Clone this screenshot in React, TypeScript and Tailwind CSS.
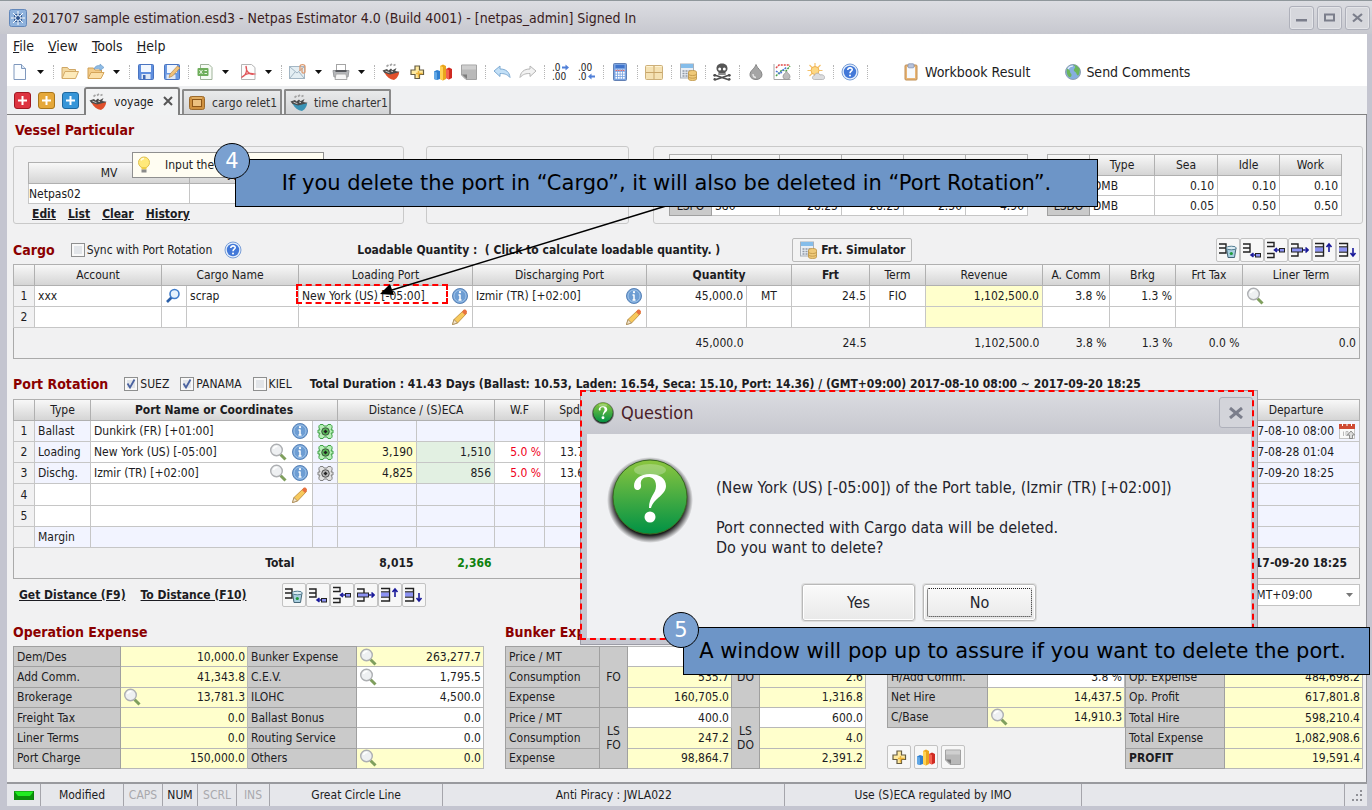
import React from 'react';

/* ---------- icons ---------- */

const svgProps = { width: 18, height: 18, viewBox: '0 0 18 18', fill: 'none' } as const;

const NewIcon = () => (
    <svg {...svgProps}>
        <path d="M3 1.5h7.5l4 4v11H3z" fill="#fbfdff" stroke="#7f98bd" />
        <path d="M10.5 1.5v4h4" fill="#dce8f6" stroke="#7f98bd" />
    </svg>
);

const FolderIcon = () => (
    <svg {...svgProps}>
        <path d="M1 15V4.5h5.5l1.5 2h6.5V9" fill="#f3d9a0" stroke="#cfa766" />
        <path d="M1 15.5 4 8.5h13.5l-3 7z" fill="#fdeaba" stroke="#d4ab68" />
    </svg>
);

const FolderArrowIcon = () => (
    <svg {...svgProps}>
        <path d="M1 15V5h5.5l1.5 2h6.5v2" fill="#f3cb88" stroke="#cf9f55" />
        <path d="M1 15.5 4 9.5h13l-3 6z" fill="#fbdfa8" stroke="#d4a45a" />
        <path d="M7 6c1-3 4-4 6-3.2V1l4 3.5-4 3V6c-2-.6-4-.5-6 0z" fill="#8fbce6" stroke="#6293c4" strokeWidth=".6" />
    </svg>
);

const SaveIcon = () => (
    <svg {...svgProps}>
        <rect x="1.5" y="1.5" width="15" height="15" rx="1" fill="#5f8fdf" stroke="#4a74c0" />
        <rect x="4" y="2" width="10" height="7" fill="#f2f7fe" />
        <rect x="4.5" y="11" width="9" height="5" fill="#dfe8f5" />
        <rect x="6" y="12" width="2.5" height="4" fill="#3f68b4" />
    </svg>
);

const SaveAsIcon = () => (
    <svg {...svgProps}>
        <rect x="1.5" y="1.5" width="15" height="15" rx="1" fill="#6a99e2" stroke="#4a74c0" />
        <rect x="4" y="2" width="10" height="8" fill="#f2f7fe" />
        <rect x="3.5" y="11.5" width="9" height="4.5" fill="#dfe8f5" />
        <path d="M6 14.5 7 11l7.5-8 2.500 2-7.500 8z" fill="#f1c27a" stroke="#b98a4a" strokeWidth=".7" />
    </svg>
);

const ExcelIcon = () => (
    <svg {...svgProps}>
        <path d="M4.500 1.500h8.500l3 3v12H4.500z" fill="#f7fbf5" stroke="#9fb39a" />
        <rect x="1.500" y="5" width="11" height="8" rx="1" fill="#6fae5c" />
        <path d="m3.500 7 3 4m0-4-3 4M8.500 7.500h2.500M8.500 10.500h2.500" stroke="#e8f5e2" />
    </svg>
);

const PdfIcon = () => (
    <svg {...svgProps}>
        <path d="M2.500 1.500h10l3.500 3v12h-13.500z" fill="#fdfdfd" stroke="#b5b5b5" />
        <path d="M2.500 14.500c4-2 6-6 4.500-11.500C7 9 11 12.500 15.500 11 11 9.500 6 11 2.500 14.500z" stroke="#e0565a" strokeWidth="1.300" />
    </svg>
);

const MailIcon = () => (
    <svg {...svgProps}>
        <rect x=".5" y="3.500" width="15" height="12" fill="#e4eef3" stroke="#a3b6c4" />
        <path d="m1 4 7 6 7-6M1 15l5-6M15 15l-5-6" stroke="#a3b6c4" />
        <path d="M11 8V3.500c0-2.500 5-2.500 5 0V9c0 1.500-3 1.500-3 0V4.500" stroke="#dd9a70" strokeWidth="1.300" />
    </svg>
);

const PrintIcon = () => (
    <svg {...svgProps}>
        <rect x="4.500" y="1.500" width="9" height="6" fill="#fff" stroke="#a5a5a5" />
        <path d="M1 7.500h16l-1 6.500H2z" fill="#b4b6b9" stroke="#9a9c9f" />
        <rect x="3.500" y="7" width="11" height="2" fill="#55575b" />
        <path d="M4 11h10l1 5.500H3z" fill="#f6f6f6" stroke="#a8a8a8" />
    </svg>
);

const ShipIcon = ({ hull = '#e0502c' }: { hull?: string }) => (
    <svg {...svgProps}>
        <path d="M4.500 3.500 6.500 2M8 2.500 10 1M11.500 2.500l2-1" stroke="#a3a3a3" strokeWidth="1.600" />
        <path d="M.5 7.500 5 6l1.500 1.500L9 5.500l1.500 1.800L14.500 5l-1.300 3 4.300.8-3 3.700-7 .5-5-3z" fill="#4b4b4b" />
        <path d="M2.500 9.800 8 11.500l9-2.200c.3 2-1 4-2.500 6L12 17c-4-.5-7.500-3-9.500-7.200z" fill={hull} />
        <path d="m3.500 8.200 4 1.500M9 8l2 .6" stroke="#c9c9c9" />
    </svg>
);

const PlusIcon = () => (
    <svg {...svgProps}>
        <path d="M7 3h4.500v4h4v4.500h-4v4H7v-4H3V7h4z" fill="#ffeaa0" stroke="#665c42" strokeWidth="1.200" />
        <path d="M8 10.500h6.500M10.500 8v6.500" stroke="#efb53a" strokeWidth="1.500" />
    </svg>
);

const ChartIcon = () => (
    <svg {...svgProps}>
        <path d="M0 8.500 3 7l3 1v8l-3 1-3-1z" fill="#2f7fd0" />
        <path d="M0 8.500 3 9.500V17l-3-1z" fill="#62a8e6" />
        <path d="m6 3 3-1.500L12 3v13l-3 1.500L6 16z" fill="#e9a51c" />
        <path d="m6 3 3 1v13.500L6 16z" fill="#ffd253" />
        <path d="m12 6 3-1.500L18 6v9l-3 1.500-3-1.500z" fill="#cf2a22" />
        <path d="m12 6 3 1v9.500L12 15z" fill="#f4614f" />
    </svg>
);

const NoteIcon = () => (
    <svg {...svgProps}>
        <path d="M1.500 2h15v14.500H6L1.500 12z" fill="#b9b9b9" stroke="#a2a2a2" />
        <path d="M2 11.500h5v4.500z" fill="#7d7d7d" />
        <path d="M2 2.500h14v4H2z" fill="#cfcfcf" />
    </svg>
);

const UndoIcon = ({ redo = false }: { redo?: boolean }) => (
    <svg {...svgProps}>
        <path
            d={redo ? 'm17 8-6-5v3C5 6 1.500 9 1 14.500 4 11 7 10.500 11 10.500v3z' : 'm1 8 6-5v3c6 0 9.500 3 10 8.500-3-3.500-6-4-10-4v3z'}
            fill={redo ? '#f2f2f2' : '#c3e0f7'}
            stroke={redo ? '#b5b5b5' : '#7fabd3'}
        />
    </svg>
);

const DecimalIcon = ({ less = false }: { less?: boolean }) => (
    <svg {...svgProps}>
        <text x="0" y="8" fontSize="10" fill="#222">{less ? '.00' : '.0'}</text>
        <text x="0" y="17" fontSize="10" fill="#222">{less ? '.0' : '.00'}</text>
        <path d={less ? 'm10 13.500 3.500-3v2H17v2h-3.500v2z' : 'm17 4.500-3.500-3v2H10v2h3.500v2z'} fill="#4f7fd8" />
    </svg>
);

const CalcIcon = () => (
    <svg {...svgProps}>
        <rect x="2.500" y=".5" width="13" height="17" rx="1" fill="#7aa4e2" stroke="#6280b4" />
        <rect x="4.500" y="2" width="9" height="3" fill="#3f74cc" />
        <g fill="#fff">
            {[6.5, 9, 11.5, 14].map((y) => [4.5, 7, 9.5, 12].map((x) => <rect key={x + '-' + y} x={x} y={y} width="1.700" height="1.700" />))}
        </g>
        <path d="M4.500 7.400h9" stroke="#e05656" strokeDasharray="1.700 .8" />
    </svg>
);

const BoxIcon = () => (
    <svg {...svgProps}>
        <rect x=".5" y="2.500" width="17" height="14" rx="1" fill="#f5e2b4" stroke="#cdb07a" />
        <path d="M9 3v13M1 9.500h16" stroke="#c9a669" />
        <path d="M1.500 3.500H8M10 3.500h6.500" stroke="#fff3d2" />
    </svg>
);

const CalcDbIcon = () => (
    <svg {...svgProps}>
        <rect x="1.500" y="1" width="13" height="14" fill="#e9eef4" stroke="#a8b0ba" />
        <rect x="2" y="1" width="12" height="4" fill="#85bdea" />
        <path d="M3.500 8h8M3.500 10.500h8M3.500 13h8" stroke="#8f98a5" strokeDasharray="2 1" strokeWidth="1.400" />
        <path d="M9.500 9c0-2 8-2 8 0v7c0 2-8 2-8 0z" fill="#efc978" stroke="#bb9242" strokeWidth=".8" />
        <path d="M9.500 11c0 2 8 2 8 0M9.500 13.700c0 2 8 2 8 0" stroke="#bb9242" strokeWidth=".8" />
    </svg>
);

const SkullIcon = () => (
    <svg {...svgProps}>
        <path d="m1.500 12 15 5M16.500 12l-15 5" stroke="#4c4c4c" strokeWidth="1.600" />
        <circle cx="1.700" cy="12.300" r="1.400" fill="#4c4c4c" />
        <circle cx="16.300" cy="12.300" r="1.400" fill="#4c4c4c" />
        <circle cx="1.700" cy="16.300" r="1.200" fill="#4c4c4c" />
        <circle cx="16.300" cy="16.300" r="1.200" fill="#4c4c4c" />
        <path d="M9 .5c4 0 5.500 2.500 5.500 5 0 2-1 3-2 3.500V12h-7V9c-1-.5-2-1.500-2-3.500C3.500 3 5 .5 9 .5z" fill="#555" />
        <circle cx="6.700" cy="6" r="1.500" fill="#fff" />
        <circle cx="11.300" cy="6" r="1.500" fill="#fff" />
        <path d="M7 10v2M9 10v2M11 10v2" stroke="#ddd" strokeWidth=".8" />
    </svg>
);

const DropIcon = () => (
    <svg {...svgProps}>
        <path d="M9 1.500c1 4 6 6 6 10 0 3.500-3 5-6 5s-6-1.500-6-5c0-4 5-6 6-10z" fill="#a5a5a5" stroke="#858585" />
        <path d="M6 11c0 2 1 3.500 3 3.500" stroke="#e4e4e4" strokeWidth="1.500" />
    </svg>
);

const GraphIcon = () => (
    <svg {...svgProps}>
        <path d="M1 1v15.500h16.500" stroke="#a5a5a5" />
        <path d="m3 5 3-3h11" stroke="#e04a4a" strokeWidth="1.500" strokeDasharray="2 1" />
        <path d="m3 13 6-6 4 1 4-5" stroke="#45a045" strokeWidth="1.500" strokeDasharray="2 1" />
        <path d="m3 8 4 3 3-4 4-3" stroke="#4c74d8" strokeWidth="1.500" strokeDasharray="2 1" />
        <path d="M13.500 8c.5 2 3.500 3 3.500 5.500S15 16.500 13.500 16.500 10 16 10 13.500 13 10 13.500 8z" fill="#bdbdbd" stroke="#8a8a8a" strokeWidth=".7" />
    </svg>
);

const SunIcon = () => (
    <svg {...svgProps}>
        <path d="M8 0v15M.5 7.500h15M2.500 2l11 11M13.500 2l-11 11" stroke="#f5c26a" strokeWidth="1.200" />
        <circle cx="8" cy="7.500" r="4" fill="#fdd884" stroke="#f0b250" />
        <path d="M7.500 16.500c-3 0-2.500-4 0-4 .5-3 5-3 5.500-.5 3-1 5 1 4.500 3 0 1-1 1.500-2 1.500z" fill="#dcdddf" stroke="#adafb1" strokeWidth=".8" />
    </svg>
);

const HelpIcon = () => (
    <svg {...svgProps}>
        <circle cx="9" cy="9" r="8" fill="#e3eefb" stroke="#7b9fd8" />
        <circle cx="9" cy="9" r="6.200" fill="#4278d8" />
        <path d="M6.800 7c0-3 4.600-2.700 4.400-.2C11.100 8.300 9 8.200 9 10.200" stroke="#fff" strokeWidth="1.600" />
        <circle cx="9" cy="12.500" r="1" fill="#fff" />
    </svg>
);

const ClipboardIcon = () => (
    <svg {...svgProps}>
        <rect x="3" y="2" width="12" height="15" rx="1" fill="#e8b576" stroke="#c08f55" />
        <rect x="5" y="4" width="8" height="11" fill="#f6f9fd" />
        <rect x="6" y=".8" width="6" height="4" rx="1" fill="#b7c3dc" stroke="#8493b4" strokeWidth=".8" />
    </svg>
);

const GlobeIcon = () => (
    <svg {...svgProps}>
        <circle cx="9" cy="9" r="7.500" fill="#86aedf" stroke="#8fa0b5" />
        <path d="M9 1.700c3 0 6 2.300 7 5-1 2 0 4-2 6-2-1-1-3-3-4s-1-3 0-4-1-2-2-3zM3 5.500c1 1 3 1 3 3s2 2 1.500 4-2 2-3 1S2 9 3 5.500z" fill="#6cb65b" />
        <path d="M4 6c1-2 3-3 5-3" stroke="#e4f0fb" strokeWidth="1.200" />
    </svg>
);

const InfoIcon = () => (
    <svg {...svgProps} className="shrink-0">
        <circle cx="9" cy="9" r="7.500" fill="#6d9dd3" stroke="#5a84b8" />
        <circle cx="9" cy="9" r="6" stroke="#a9cbee" strokeWidth=".8" />
        <path d="M9 7.500V13M7.500 8H9M7.500 13h3" stroke="#fff" strokeWidth="1.500" />
        <circle cx="9" cy="5.200" r="1.100" fill="#fff" />
    </svg>
);

const LensIcon = () => (
    <svg {...svgProps} className="shrink-0">
        <path d="m11.500 11.500 5 5" stroke="#7f9f5d" strokeWidth="3" />
        <circle cx="7.500" cy="7" r="5.800" fill="#eef0f2" stroke="#adafb2" strokeWidth="1.400" />
        <path d="M4.500 6c.5-2 2-2.800 4-2.500" stroke="#fff" strokeWidth="1.500" />
    </svg>
);

const BlueLensIcon = () => (
    <svg width="16" height="16" viewBox="0 0 16 16" fill="none">
        <path d="m2 14 5-5" stroke="#2a5ea8" strokeWidth="2.600" />
        <circle cx="9.500" cy="6" r="4.500" fill="#e5f1fc" stroke="#3f7ccb" strokeWidth="1.600" />
    </svg>
);

const PencilIcon = () => (
    <svg {...svgProps} className="shrink-0">
        <path d="m1.500 16.500 1.500-5L12.500 2.500l3 3L6.500 15z" fill="#f7c95c" stroke="#c0913f" strokeWidth=".9" />
        <path d="m11 4 1.500-2c1.500-1.500 4.500 1 3.200 3L14 7z" fill="#e8713f" />
        <path d="m1.500 16.500 1.500-5L6.500 15z" fill="#f4e4c8" stroke="#9a8158" strokeWidth=".7" />
    </svg>
);

const TargetIcon = ({ on = false }: { on?: boolean }) => (
    <svg width="17" height="17" viewBox="0 0 17 17" fill="none" className="mx-auto">
        <path d="M6 1.500H4C2.500 1.500 1.500 3 2 5l1 2H1v3h2l-1 2c-.5 2 .5 3.500 2 3.500h2l1-1.500h3l1 1.500h2c1.500 0 2.500-1.500 2-3.500l-1-2h2V7h-2l1-2c.5-2-.5-3.500-2-3.500h-2L10 3H7z" fill={on ? '#b5f0b5' : '#e2e2e2'} stroke={on ? '#3f9f45' : '#808080'} />
        <circle cx="8.500" cy="8.500" r="3.800" fill={on ? '#56b856' : '#b5b5b5'} stroke="#333" strokeWidth=".8" />
        <path d="M8.500 6.500 10.500 8.500l-2 2-2-2z" fill="#222" />
    </svg>
);

const CalendarIcon = () => (
    <svg {...svgProps} className="shrink-0">
        <rect x="1.500" y="3" width="15" height="13.500" fill="#fafafa" stroke="#c5c5c5" />
        <path d="M1 2h16v5H1z" fill="#cf4a34" />
        <path d="M4.500 1v3M9 1v3M13.500 1v3" stroke="#fff" />
        <path d="M5.500 9.500V14M8 9.500h2v4H8z" stroke="#bbb" />
        <path d="m13 9-3.500 4h2v3.500h3V13h2z" fill="#ddd" stroke="#777" strokeWidth=".8" />
    </svg>
);

const BulbIcon = () => (
    <svg {...svgProps}>
        <circle cx="9" cy="6.500" r="5.500" fill="#ffe97a" stroke="#dfc04f" />
        <path d="M6.500 11h5v2.500h-5z" fill="#f0cf48" />
        <path d="M6.500 13.500h5v3h-5z" fill="#8b8b8b" />
        <path d="M6 4.500c.5-1.300 1.500-2 3-2" stroke="#fffbe0" strokeWidth="1.500" />
    </svg>
);

const CrateIcon = () => (
    <svg {...svgProps}>
        <rect x="1.500" y="2.500" width="15" height="13" rx="2" fill="#cf9140" stroke="#9c6a2c" />
        <rect x="4.500" y="5.500" width="9" height="7" fill="#ecc07e" stroke="#8f5718" />
        <path d="M4 4h10" stroke="#f2c883" />
    </svg>
);

const QuestionIcon = ({ size }: { size: number }) => (
    <svg width={size} height={size} viewBox="0 0 90 90" fill="none">
        <defs>
            <linearGradient id={'q' + size} x1="0" y1="0" x2="0" y2="1">
                <stop offset="0" stopColor="#8cc63f" />
                <stop offset="1" stopColor="#009245" />
            </linearGradient>
            <radialGradient id={'s' + size}>
                <stop offset=".82" stopColor="#111" stopOpacity=".95" />
                <stop offset="1" stopColor="#111" stopOpacity="0" />
            </radialGradient>
        </defs>
        <circle cx="45" cy="46" r="43" fill={'url(#s' + size + ')'} />
        <circle cx="45" cy="43" r="37" fill={'url(#q' + size + ')'} stroke="#3a6b22" />
        <ellipse cx="45" cy="16" rx="16" ry="6" fill="#fff" opacity=".25" />
        <path d="M36 31c1 6-7 7-7 1 0-7 6-12 16-12 9 0 16 4 16 12 0 9-12 12-15 22h-2c0-12 7-14 7-22 0-7-4-9-8-9-5 0-8 3-7 8z" fill="#fff" />
        <circle cx="45" cy="63" r="5.500" fill="#fff" />
    </svg>
);

/* row editing glyphs: trash, insert below, insert, remove, move up, move down */
const rowTools = [
    { label: 'Clear all rows', art: <><path d="M0 3h7v4H0M0 12h7V7" stroke="#222" strokeWidth="1.400" /><path d="M7.500 7h9.500l-1.500 9.500H9z" fill="#a9cfe0" stroke="#446677" /><ellipse cx="12.300" cy="7" rx="5" ry="1.800" fill="#dcecf3" stroke="#557f94" /><circle cx="12.300" cy="12.500" r="1.600" fill="#1f9a3c" /></> },
    { label: 'Add row', art: <><path d="M0 3h7v4H0M0 11h7V7" stroke="#222" strokeWidth="1.400" /><path d="M8 14h4M10.500 12 8 14l2.500 2" stroke="#1a1a9a" strokeWidth="1.600" /><rect x="12.500" y="12.500" width="5" height="3.500" fill="#8c92f2" stroke="#222" /></> },
    { label: 'Insert row', art: <><path d="M0 1.500h7v4H0M0 12.500h7v4H0" stroke="#222" strokeWidth="1.400" /><path d="M7.500 9h5M10 7 7.500 9l2.500 2" stroke="#1a1a9a" strokeWidth="1.600" /><rect x="12.500" y="7.500" width="5" height="3.500" fill="#8c92f2" stroke="#222" /></> },
    { label: 'Remove row', art: <><path d="M0 3h7v4M0 15h7v-4" stroke="#222" strokeWidth="1.400" /><rect x=".5" y="7" width="11" height="4" fill="#8c92f2" stroke="#222" /><path d="M12 9h5M14.500 6.500 17 9l-2.500 2.500" stroke="#1a1a9a" strokeWidth="1.600" /></> },
    { label: 'Move row up', art: <><path d="M0 2.500h8.500V15H0M0 11h8.500M0 6h8.500" stroke="#222" strokeWidth="1.400" /><rect x="0" y="6.500" width="8" height="4" fill="#8c92f2" /><path d="M14 11V3M11.500 6 14 3l2.500 3" stroke="#1a1a9a" strokeWidth="1.600" /></> },
    { label: 'Move row down', art: <><path d="M0 2.500h8.500V15H0M0 11h8.500M0 6h8.500" stroke="#222" strokeWidth="1.400" /><rect x="0" y="6.500" width="8" height="4" fill="#8c92f2" /><path d="M14 7v8M11.500 12l2.500 3 2.500-3" stroke="#1a1a9a" strokeWidth="1.600" /></> },
];

/* ---------- small building blocks ---------- */

function RowTools() {
    return (
        <div className="flex">
            {rowTools.map((tool) => (
                <button key={tool.label} aria-label={tool.label} className="flex h-6 w-6 items-center justify-center rounded-[2px] border border-[#c3c3c3] bg-[#f7f7f7]">
                    <svg {...svgProps} className="shrink-0">{tool.art}</svg>
                </button>
            ))}
        </div>
    );
}

function Check({ label, checked = false }: { label: string; checked?: boolean }) {
    return (
        <label className="flex items-center gap-[2px] whitespace-nowrap">
            <span className="grid h-[14px] w-[14px]">
                <input type="checkbox" defaultChecked={checked} className="peer col-start-1 row-start-1 h-[14px] w-[14px] appearance-none border border-[#8e8f8f] bg-[#e2e5e9] shadow-[inset_0_0_0_2px_#f8f8f8]" />
                <svg viewBox="0 0 14 14" fill="none" className="pointer-events-none invisible col-start-1 row-start-1 h-[14px] w-[14px] peer-checked:visible">
                    <path d="m3.500 6.500 2.500 4 4.500-8" stroke="#4a62a0" strokeWidth="1.800" />
                </svg>
            </span>
            {label}
        </label>
    );
}

function Cols({ widths }: { widths: number[] }) {
    return (
        <colgroup>
            {widths.map((width, idx) => <col key={idx} style={{ width }} />)}
        </colgroup>
    );
}

const SectionTitle = ({ children }: { children: React.ReactNode }) => (
    <h2 className="text-sm font-bold whitespace-nowrap text-[#8b0000]">{children}</h2>
);

const GroupBox = ({ className, children }: { className: string; children?: React.ReactNode }) => (
    <div className={'h-[78px] rounded-[3px] border border-[#c9c9c9] ' + className}>{children}</div>
);

const headRow = 'h-[21px] bg-linear-to-b from-[#f8f8f8] to-[#d3d3d3]';
const th = 'border border-[#b0b0b0] font-normal whitespace-nowrap';
const thBold = 'border border-[#b0b0b0] font-bold whitespace-nowrap';
const td = 'border border-[#c6c6c6] bg-white px-[3px] whitespace-nowrap';
const tdCalc = 'border border-[#c6c6c6] bg-[#ffffcc] px-[3px] whitespace-nowrap';
const tdBlue = 'border border-[#c6c6c6] bg-[#f2f4ff] px-[3px] whitespace-nowrap';
const tdNum = 'border border-[#c6c6c6] bg-[#f1f1f2] text-center';
const tdLabel = 'border border-[#a0a0a0] bg-[#cacaca] px-[3px] whitespace-nowrap';
const table = 'w-full table-fixed border-collapse border border-[#999]';

/* ---------- top of the window ---------- */

const windowButton = 'flex h-6 w-[25px] items-center justify-center rounded-[3px] border border-[#aeb0ba] bg-[#d6d7dc] shadow-[inset_0_0_0_1px_#e3e4e8]';

function TitleBar() {
    return (
        <header className="-mr-[5px] -ml-[7px] flex h-[34px] items-center justify-between border-t border-[#8f979b] bg-linear-to-b from-[#dcdde2] to-[#c7c8cf] pr-[2px] pl-[9px]">
            <div className="flex items-center gap-[5px]">
                <svg {...svgProps}>
                    <rect x=".5" y=".5" width="17" height="17" rx="2" fill="#8fb2dc" stroke="#6287ba" />
                    <circle cx="9" cy="9" r="4" stroke="#2f568f" />
                    <path d="M9 2v14M2 9h14M4 4l10 10M14 4 4 14" stroke="#fff" />
                    <circle cx="9" cy="9" r="2" fill="#2f568f" />
                </svg>
                <h1 className="text-sm text-[#3a1c1c]">201707 sample estimation.esd3 - Netpas Estimator 4.0 (Build 4001) - [netpas_admin] Signed In</h1>
            </div>
            <div className="flex gap-[3px]">
                <button aria-label="Minimize" className={windowButton}>
                    <svg width="11" height="11" viewBox="0 0 11 11"><rect y="7" width="11" height="2.500" fill="#7b7e8b" /></svg>
                </button>
                <button aria-label="Maximize" className={windowButton}>
                    <svg width="11" height="11" viewBox="0 0 11 11"><rect x="1" y="2.500" width="9" height="6" fill="none" stroke="#7b7e8b" strokeWidth="2" /></svg>
                </button>
                <button aria-label="Close" className={windowButton}>
                    <svg width="11" height="11" viewBox="0 0 11 11"><path d="m1 2 9 7.500M10 2 1 9.500" stroke="#7b7e8b" strokeWidth="2.200" /></svg>
                </button>
            </div>
        </header>
    );
}

type Tool = { name: string; icon?: React.ReactNode; menu?: boolean; sep?: 'thin' | 'wide' };

const tools: Tool[] = [
    { name: 'New', icon: <NewIcon />, menu: true, sep: 'thin' },
    { name: 'Open', icon: <FolderIcon /> },
    { name: 'Import', icon: <FolderArrowIcon />, menu: true, sep: 'thin' },
    { name: 'Save', icon: <SaveIcon /> },
    { name: 'Save as', icon: <SaveAsIcon />, sep: 'thin' },
    { name: 'Excel', icon: <ExcelIcon />, menu: true },
    { name: 'PDF', icon: <PdfIcon />, menu: true, sep: 'thin' },
    { name: 'Mail', icon: <MailIcon />, menu: true },
    { name: 'Print', icon: <PrintIcon />, menu: true, sep: 'thin' },
    { name: 'Voyage', icon: <ShipIcon /> },
    { name: 'Add', icon: <PlusIcon /> },
    { name: 'Chart', icon: <ChartIcon /> },
    { name: 'Note', icon: <NoteIcon />, sep: 'thin' },
    { name: 'Undo', icon: <UndoIcon /> },
    { name: 'Redo', icon: <UndoIcon redo />, sep: 'thin' },
    { name: 'More decimals', icon: <DecimalIcon /> },
    { name: 'Fewer decimals', icon: <DecimalIcon less />, sep: 'thin' },
    { name: 'Calculator', icon: <CalcIcon />, sep: 'wide' },
    { name: 'Layout', icon: <BoxIcon />, sep: 'wide' },
    { name: 'Freight simulator', icon: <CalcDbIcon />, sep: 'wide' },
    { name: 'Piracy', icon: <SkullIcon />, sep: 'wide' },
    { name: 'Bunker', icon: <DropIcon /> },
    { name: 'Bunker prices', icon: <GraphIcon />, sep: 'wide' },
    { name: 'Weather', icon: <SunIcon />, sep: 'wide' },
    { name: 'Help', icon: <HelpIcon />, sep: 'wide' },
];

function Toolbar() {
    return (
        <div className="flex h-7 items-center bg-white">
            {tools.map((tool) => (
                <React.Fragment key={tool.name}>
                    <button aria-label={tool.name} className="flex w-[26px] shrink-0 justify-center">{tool.icon}</button>
                    {tool.menu && (
                        <button aria-label={tool.name + ' menu'} className="w-[17px] shrink-0 pl-1">
                            <svg width="7" height="4" viewBox="0 0 7 4"><path d="M0 0h7L3.500 4z" fill="#111" /></svg>
                        </button>
                    )}
                    {tool.sep && (
                        <span className={'flex shrink-0 justify-center ' + (tool.sep === 'wide' ? 'w-2' : 'w-[7px]')}>
                            <span className="h-[14px] border-l border-dotted border-[#b5b5b5]" />
                        </span>
                    )}
                </React.Fragment>
            ))}
            <button className="ml-[31px] flex items-center gap-[5px] text-sm whitespace-nowrap"><ClipboardIcon />Workbook Result</button>
            <button className="ml-[34px] flex items-center gap-1 text-sm whitespace-nowrap"><GlobeIcon />Send Comments</button>
        </div>
    );
}

const addButton = 'flex h-[17px] w-[17px] items-center justify-center rounded-[3px] border';
const backTab = 'flex h-[25px] items-center rounded-t-[2px] border-2 border-b-0 border-[#8a8a8a] bg-linear-to-b from-[#e9eaeb] to-[#d3d4d6] pl-1 text-[#333] whitespace-nowrap';

function Tabs() {
    const plus = <svg width="9" height="9" viewBox="0 0 9 9"><path d="M4.500 0v9M0 4.500h9" stroke="#fff" strokeWidth="2" /></svg>;
    return (
        <div className="flex h-[29px] items-end border-b border-[#808080] bg-[#eff0f2] pl-[7px]">
            <div className="flex items-center gap-[7px] self-center">
                <button aria-label="New voyage" className={addButton + ' border-[#a01822] bg-[#dd3340]'}>{plus}</button>
                <button aria-label="New cargo relet" className={addButton + ' border-[#a8751a] bg-[#e5a83a]'}>{plus}</button>
                <button aria-label="New time charter" className={addButton + ' border-[#1d679e] bg-[#3695d8]'}>{plus}</button>
            </div>
            <div role="tablist" className="ml-[5px] flex items-end gap-[2px]">
                <button role="tab" aria-selected="true" className="-mb-px flex h-[28px] w-[96px] items-center gap-[7px] rounded-t-[3px] border-2 border-b-0 border-[#808080] bg-[#f1f2f3] pl-[3px]">
                    <ShipIcon />
                    <span>voyage</span>
                    <svg width="10" height="10" viewBox="0 0 10 10" className="mb-[3px] ml-[2px]"><path d="m1 1 8 8M9 1 1 9" stroke="#555" strokeWidth="2" /></svg>
                </button>
                <button role="tab" aria-selected="false" className={backTab + ' w-[100px] gap-[6px]'}><CrateIcon />cargo relet1</button>
                <button role="tab" aria-selected="false" className={backTab + ' w-[107px] gap-[6px]'}><ShipIcon hull="#3b93b5" />time charter1</button>
            </div>
        </div>
    );
}

/* ---------- sections ---------- */

function VesselParticular() {
    return (
        <section>
            <div className="mb-[2px] flex h-[29px] items-center pl-[2px]"><SectionTitle>Vessel Particular</SectionTitle></div>
            <div className="flex">
                <GroupBox className="w-[391px] shrink-0 pt-[15px] pr-4 pl-[14px]">
                    <table className={table}>
                        <Cols widths={[161, 90, 108]} />
                        <thead><tr className={headRow}><th className={th}>MV</th><th className={th}>Type</th><th className={th} /></tr></thead>
                        <tbody><tr className="h-5"><td className={td + ' pl-0'}>Netpas02</td><td className={td} /><td className={td} /></tr></tbody>
                    </table>
                    <nav className="flex gap-3 pt-[2px] pl-1 font-bold underline">
                        <a href="#edit">Edit</a>
                        <a href="#list">List</a>
                        <a href="#clear">Clear</a>
                        <a href="#history">History</a>
                    </nav>
                </GroupBox>
                <GroupBox className="ml-[22px] w-[203px] shrink-0" />
                <GroupBox className="ml-6 flex flex-1 gap-[19px] pt-[7px] pr-5 pl-[15px]">
                    <div className="flex-[359]">
                        <table className={table}>
                            <Cols widths={[42, 68, 62, 62, 62, 62]} />
                            <thead>
                                <tr className={headRow}><th className={th} /><th className={th} /><th className={th} /><th className={th} /><th className={th} /><th className={th} /></tr>
                            </thead>
                            <tbody>
                                <tr className="h-5"><td className={tdLabel} /><td className={td} /><td className={td} /><td className={td} /><td className={td} /><td className={td} /></tr>
                                <tr className="h-5 text-right"><td className={tdLabel + ' text-center'}>LSFO</td><td className={td + ' text-left'}>380</td><td className={td}>28.25</td><td className={td}>28.25</td><td className={td}>2.50</td><td className={td}>4.90</td></tr>
                            </tbody>
                        </table>
                    </div>
                    <div className="flex-[294]">
                        <table className={table}>
                            <Cols widths={[42, 65, 63, 62, 62]} />
                            <thead>
                                <tr className={headRow}><th className={th} /><th className={th}>Type</th><th className={th}>Sea</th><th className={th}>Idle</th><th className={th}>Work</th></tr>
                            </thead>
                            <tbody>
                                <tr className="h-5 text-right"><td className={tdLabel} /><td className={td + ' text-left'}>DMB</td><td className={td}>0.10</td><td className={td}>0.10</td><td className={td}>0.10</td></tr>
                                <tr className="h-5 text-right"><td className={tdLabel + ' text-center'}>LSDO</td><td className={td + ' text-left'}>DMB</td><td className={td}>0.05</td><td className={td}>0.50</td><td className={td}>0.50</td></tr>
                            </tbody>
                        </table>
                    </div>
                </GroupBox>
            </div>
        </section>
    );
}

function Cargo() {
    return (
        <section>
            <div className="mt-3 flex h-7 items-center">
                <SectionTitle>Cargo</SectionTitle>
                <div className="ml-4"><Check label="Sync with Port Rotation" /></div>
                <button aria-label="Help on sync" className="ml-3"><HelpIcon /></button>
                <button className="ml-[115px] font-bold whitespace-pre">Loadable Quantity :  ( Click to calculate loadable quantity. )</button>
                <button className="ml-[72px] flex h-6 w-[120px] items-center justify-center gap-1 rounded-[2px] border border-[#b9b9b9] bg-[#f3f3f3] font-bold whitespace-nowrap"><CalcDbIcon />Frt. Simulator</button>
                <div className="ml-auto"><RowTools /></div>
            </div>
            <table className={table + ' bg-[#f1f1f2]'}>
                <Cols widths={[21, 127, 25, 112, 174, 174, 100, 45, 78, 56, 117, 67, 66, 67, 117]} />
                <thead>
                    <tr className={headRow}>
                        <th className={th} />
                        <th className={th}>Account</th>
                        <th className={th} colSpan={2}>Cargo Name</th>
                        <th className={th}>Loading Port</th>
                        <th className={th}>Discharging Port</th>
                        <th className={thBold} colSpan={2}>Quantity</th>
                        <th className={thBold}>Frt</th>
                        <th className={th}>Term</th>
                        <th className={th}>Revenue</th>
                        <th className={th}>A. Comm</th>
                        <th className={th}>Brkg</th>
                        <th className={th}>Frt Tax</th>
                        <th className={th}>Liner Term</th>
                    </tr>
                </thead>
                <tbody>
                    <tr className="h-[21px] text-right">
                        <td className={tdNum}>1</td>
                        <td className={td + ' text-left'}>xxx</td>
                        <td className={td}><button aria-label="Find account" className="block"><BlueLensIcon /></button></td>
                        <td className={td + ' text-left'}>scrap</td>
                        <td className={td}><div className="flex items-center justify-between">New York (US) [-05:00]<InfoIcon /></div></td>
                        <td className={td}><div className="flex items-center justify-between">Izmir (TR) [+02:00]<InfoIcon /></div></td>
                        <td className={td}>45,000.0</td>
                        <td className={td + ' text-center'}>MT</td>
                        <td className={td}>24.5</td>
                        <td className={td + ' text-center'}>FIO</td>
                        <td className={tdCalc}>1,102,500.0</td>
                        <td className={td}>3.8 %</td>
                        <td className={td}>1.3 %</td>
                        <td className={td} />
                        <td className={td}><LensIcon /></td>
                    </tr>
                    <tr className="h-[21px]">
                        <td className={tdNum}>2</td>
                        <td className={td} />
                        <td className={td} />
                        <td className={td} />
                        <td className={td}><div className="flex justify-end"><PencilIcon /></div></td>
                        <td className={td}><div className="flex justify-end"><PencilIcon /></div></td>
                        <td className={td} />
                        <td className={td} />
                        <td className={td} />
                        <td className={td} />
                        <td className={tdCalc} />
                        <td className={td} />
                        <td className={td} />
                        <td className={td} />
                        <td className={td} />
                    </tr>
                </tbody>
                <tfoot>
                    <tr className="h-[31px] border border-[#aaa] text-right">
                        <td colSpan={6} />
                        <td className="px-[3px]">45,000.0</td>
                        <td />
                        <td className="px-[3px]">24.5</td>
                        <td />
                        <td className="px-[3px]">1,102,500.0</td>
                        <td className="px-[3px]">3.8 %</td>
                        <td className="px-[3px]">1.3 %</td>
                        <td className="px-[3px]">0.0 %</td>
                        <td className="px-[3px]">0.0</td>
                    </tr>
                </tfoot>
            </table>
        </section>
    );
}

type Leg = {
    no: string; type: string; port: string; lens?: boolean; info?: boolean; edit?: boolean; target?: 'on' | 'off';
    dist?: string; eca?: string; wf?: string; spd?: string; departure?: string; calendar?: boolean; free?: boolean;
};

const legs: Leg[] = [
    { no: '1', type: 'Ballast', port: 'Dunkirk (FR) [+01:00]', info: true, target: 'on', departure: '2017-08-10 08:00', calendar: true },
    { no: '2', type: 'Loading', port: 'New York (US) [-05:00]', lens: true, info: true, target: 'on', dist: '3,190', eca: '1,510', wf: '5.0 %', spd: '13.70', departure: '2017-08-28 01:04' },
    { no: '3', type: 'Dischg.', port: 'Izmir (TR) [+02:00]', lens: true, info: true, target: 'off', dist: '4,825', eca: '856', wf: '5.0 %', spd: '13.60', departure: '2017-09-20 18:25' },
    { no: '4', type: '', port: '', edit: true, free: true },
    { no: '5', type: '', port: '', free: true },
    { no: '', type: 'Margin', port: '' },
];

function PortRotation() {
    return (
        <section>
            <div className="mt-[10px] flex h-[30px] items-center">
                <SectionTitle>Port Rotation</SectionTitle>
                <div className="ml-4 flex gap-[11px]">
                    <Check label="SUEZ" checked />
                    <Check label="PANAMA" checked />
                    <Check label="KIEL" />
                </div>
                <p className="ml-[18px] font-bold whitespace-nowrap">Total Duration : 41.43 Days (Ballast: 10.53, Laden: 16.54, Seca: 15.10, Port: 14.36) / (GMT+09:00) 2017-08-10 08:00 ~ 2017-09-20 18:25</p>
            </div>
            <table className={table + ' h-[180px] bg-[#f1f1f2]'}>
                <Cols widths={[21, 56, 222, 25, 79, 78, 50, 50, 638, 127]} />
                <thead>
                    <tr className={headRow}>
                        <th className={th} />
                        <th className={th}>Type</th>
                        <th className={thBold} colSpan={2}>Port Name or Coordinates</th>
                        <th className={th} colSpan={2}>Distance / (S)ECA</th>
                        <th className={th}>W.F</th>
                        <th className={th}>Spd</th>
                        <th className={th} />
                        <th className={th}>Departure</th>
                    </tr>
                </thead>
                <tbody>
                    {legs.map((leg, idx) => {
                        const filled = leg.dist ? td : tdBlue;
                        return (
                            <tr key={idx} className="h-[21px] text-right">
                                <td className={tdNum}>{leg.no}</td>
                                <td className={(leg.free ? td : tdBlue) + ' text-left'}>{leg.type}</td>
                                <td className={leg.type === 'Margin' ? tdBlue : td}>
                                    <div className="flex items-center gap-1">
                                        <span className="mr-auto">{leg.port}</span>
                                        {leg.lens && <LensIcon />}
                                        {leg.info && <InfoIcon />}
                                        {leg.edit && <PencilIcon />}
                                    </div>
                                </td>
                                <td className={tdBlue}>{leg.target && <TargetIcon on={leg.target === 'on'} />}</td>
                                <td className={leg.dist ? tdCalc : tdBlue}>{leg.dist}</td>
                                <td className={leg.eca ? 'border border-[#c6c6c6] bg-[#e2f0e2] px-[3px]' : tdBlue}>{leg.eca}</td>
                                <td className={filled + ' text-[#f00020]'}>{leg.wf}</td>
                                <td className={filled}>{leg.spd}</td>
                                <td className={tdBlue} />
                                <td className={tdBlue}>
                                    <div className="flex items-center justify-end gap-1">
                                        {leg.departure}
                                        {leg.calendar ? <CalendarIcon /> : <span className="w-[18px]" />}
                                    </div>
                                </td>
                            </tr>
                        );
                    })}
                </tbody>
                <tfoot>
                    <tr className="h-[31px] border border-[#aaa] text-right font-bold">
                        <td colSpan={3} className="pr-[18px]">Total</td>
                        <td />
                        <td className="px-[3px]">8,015</td>
                        <td className="px-[3px] text-[#0f820f]">2,366</td>
                        <td colSpan={4} className="pr-3">2017-09-20 18:25</td>
                    </tr>
                </tfoot>
            </table>
            <div className="mt-1 flex h-6 items-center">
                <a href="#get-distance" className="ml-[6px] font-bold underline">Get Distance (F9)</a>
                <a href="#to-distance" className="mr-9 ml-[15px] font-bold underline">To Distance (F10)</a>
                <RowTools />
                <div className="ml-auto grid w-[119px] items-center">
                    <select aria-label="Time zone" defaultValue="GMT+09:00" className="col-start-1 row-start-1 h-[22px] appearance-none border border-[#c3c3c3] bg-white pl-[6px]">
                        <option>GMT+09:00</option>
                    </select>
                    <svg width="7" height="4" viewBox="0 0 7 4" className="pointer-events-none col-start-1 row-start-1 mr-[7px] justify-self-end"><path d="M0 0h7L3.500 4z" fill="#777" /></svg>
                </div>
            </div>
        </section>
    );
}

type Cell = [label: string, value: string, white?: boolean, lens?: boolean];

function Value({ cell }: { cell: Cell }) {
    return (
        <td className={(cell[2] ? 'bg-white' : 'bg-[#ffffcc]') + ' border border-[#b8b8b8] px-[2px]'}>
            <div className="flex items-center">
                {cell[3] && <LensIcon />}
                <span className="ml-auto">{cell[1]}</span>
            </div>
        </td>
    );
}

const operation: [Cell, Cell][] = [
    [['Dem/Des', '10,000.0'], ['Bunker Expense', '263,277.7', false, true]],
    [['Add Comm.', '41,343.8'], ['C.E.V.', '1,795.5', true, true]],
    [['Brokerage', '13,781.3', false, true], ['ILOHC', '4,500.0', true]],
    [['Freight Tax', '0.0'], ['Ballast Bonus', '0.0', true]],
    [['Liner Terms', '0.0'], ['Routing Service', '0.0', true]],
    [['Port Charge', '150,000.0'], ['Others', '0.0', false, true]],
];

const bunker = [
    ['Price / MT', '', ''],
    ['Consumption', '535.7', '2.6'],
    ['Expense', '160,705.0', '1,316.8'],
    ['Price / MT', '400.0', '600.0'],
    ['Consumption', '247.2', '4.0'],
    ['Expense', '98,864.7', '2,391.2'],
];

const hire: Cell[] = [
    ['', '', true],
    ['H/Add Comm.', '3.8 %', true],
    ['Net Hire', '14,437.5'],
    ['C/Base', '14,910.3', false, true],
];

const profit: Cell[] = [
    ['', ''],
    ['Op. Expense', '484,698.2'],
    ['Op. Profit', '617,801.8'],
    ['Total Hire', '598,210.4'],
    ['Total Expense', '1,082,908.6'],
    ['PROFIT', '19,591.4'],
];

const smallButton = 'flex h-6 w-6 items-center justify-center rounded-[2px] border border-[#c3c3c3] bg-[#f7f7f7]';

function Summary() {
    return (
        <div className="mt-[11px] grid grid-cols-[470fr_360fr_474fr] gap-x-[21px]">
            <section>
                <div className="flex h-7 items-center"><SectionTitle>Operation Expense</SectionTitle></div>
                <table className={table + ' h-[123px]'}>
                    <Cols widths={[107, 127, 109, 127]} />
                    <tbody>
                        {operation.map(([left, right]) => (
                            <tr key={left[0]} className="h-5">
                                <td className={tdLabel}>{left[0]}</td>
                                <Value cell={left} />
                                <td className={tdLabel}>{right[0]}</td>
                                <Value cell={right} />
                            </tr>
                        ))}
                    </tbody>
                </table>
            </section>
            <section>
                <div className="flex h-7 items-center"><SectionTitle>Bunker Expense</SectionTitle></div>
                <table className={table + ' h-[123px]'}>
                    <Cols widths={[94, 28, 104, 28, 106]} />
                    <tbody>
                        {bunker.map(([label, fo, dO], idx) => (
                            <tr key={idx} className="h-5">
                                <td className={tdLabel}>{label}</td>
                                {idx % 3 === 0 && <td rowSpan={3} className="border border-[#a0a0a0] bg-[#cacaca] text-center leading-[14px]">{idx ? <>LS<br />FO</> : 'FO'}</td>}
                                <Value cell={['', fo, idx % 3 === 0]} />
                                {idx % 3 === 0 && <td rowSpan={3} className="border border-[#a0a0a0] bg-[#cacaca] text-center leading-[14px]">{idx ? <>LS<br />DO</> : 'DO'}</td>}
                                <Value cell={['', dO, idx % 3 === 0]} />
                            </tr>
                        ))}
                    </tbody>
                </table>
            </section>
            <div className="flex h-[123px] self-end">
                <div className="flex flex-1 flex-col justify-between">
                    <table className={table + ' h-[82px]'}>
                        <Cols widths={[100, 137]} />
                        <tbody>
                            {hire.map((cell) => <tr key={cell[0]} className="h-5"><td className={tdLabel}>{cell[0]}</td><Value cell={cell} /></tr>)}
                        </tbody>
                    </table>
                    <div className="flex gap-[3px]">
                        <button aria-label="Add result" className={smallButton}><PlusIcon /></button>
                        <button aria-label="Show chart" className={smallButton}><ChartIcon /></button>
                        <button aria-label="Show note" className={smallButton}><NoteIcon /></button>
                    </div>
                </div>
                <div className="flex-1">
                    <table className={table + ' h-[123px]'}>
                        <Cols widths={[99, 138]} />
                        <tbody>
                            {profit.map((cell) => (
                                <tr key={cell[0]} className="h-5">
                                    <td className={tdLabel + (cell[0] === 'PROFIT' ? ' font-bold' : '')}>{cell[0]}</td>
                                    <Value cell={cell} />
                                </tr>
                            ))}
                        </tbody>
                    </table>
                </div>
            </div>
        </div>
    );
}

const statusCell = 'flex items-center justify-center border-r border-[#a5a5ab] whitespace-nowrap';

function StatusBar() {
    return (
        <footer className="flex h-6 border-t-2 border-[#999a9e] bg-[#e6e7eb]">
            <div className={statusCell + ' w-[34px]'}>
                <svg width="20" height="9" viewBox="0 0 20 9"><rect width="20" height="9" fill="#0c8f0c" /><path d="M0 0h20l-4 5H4z" fill="#22ec22" /><path d="M0 0h20v9" stroke="#0a6a0a" fill="none" strokeWidth=".8" /></svg>
            </div>
            <div className={statusCell + ' w-[83px]'}>Modified</div>
            <div className={statusCell + ' w-[39px] text-[#a9a9ad]'}>CAPS</div>
            <div className={statusCell + ' w-[35px]'}>NUM</div>
            <div className={statusCell + ' w-[39px] text-[#a9a9ad]'}>SCRL</div>
            <div className={statusCell + ' w-[33px] text-[#a9a9ad]'}>INS</div>
            <div className={statusCell + ' flex-[173]'}>Great Circle Line</div>
            <div className={statusCell + ' flex-[342]'}>Anti Piracy : JWLA022</div>
            <div className={statusCell + ' flex-[297]'}>Use (S)ECA regulated by IMO</div>
            <div className={statusCell + ' flex-[263]'} />
            <div className="flex w-[22px] items-end justify-end pr-1 pb-1">
                <svg width="12" height="12" viewBox="0 0 12 12" fill="#8f9096">
                    <path d="M9 0h2v2H9zM5 4h2v2H5zM9 4h2v2H9zM1 9h2v2H1zM5 9h2v2H5zM9 9h2v2H9z" />
                </svg>
            </div>
        </footer>
    );
}

/* ---------- things floating over the window ---------- */

const dialogButton = 'h-[37px] w-[113px] rounded-[3px] border border-[#b9b9b9] bg-linear-to-b from-[#fafafa] to-[#e9e9e9] shadow-[inset_0_0_0_1px_#fff,0_0_0_1px_#dcdcdc]';

function QuestionDialog() {
    return (
        <div role="dialog" aria-label="Question" className="absolute top-[390px] left-[580px] h-[255px] w-[678px] border border-[#9b9ca6] bg-[#c6c7d0] px-[6px] pb-[6px]">
            <div className="-mx-[6px] flex h-[43px] items-center bg-linear-to-b from-[#dbdce1] to-[#c7c8cf] pr-1 pl-[10px]">
                <QuestionIcon size={24} />
                <span className="ml-[6px] text-lg text-[#4a2027]">Question</span>
                <button aria-label="Close dialog" className="ml-auto flex h-[31px] w-[34px] items-center justify-center rounded-[3px] border border-[#aeb0ba] bg-[#d3d4da]">
                    <svg width="14" height="12" viewBox="0 0 14 12"><path d="m1 1 12 10M13 1 1 11" stroke="#7b7e8b" strokeWidth="3" /></svg>
                </button>
            </div>
            <div className="h-[204px] bg-[#f0f1f3] pt-5 pl-[18px] text-base text-[#24242c]">
                <div className="flex gap-[21px]">
                    <QuestionIcon size={90} />
                    <div className="pt-6 leading-5 whitespace-nowrap">
                        <p className="mb-5">(New York (US) [-05:00]) of the Port table, (Izmir (TR) [+02:00])</p>
                        <p>Port connected with Cargo data will be deleted.</p>
                        <p>Do you want to delete?</p>
                    </div>
                </div>
                <div className="mt-[26px] ml-[197px] flex gap-2">
                    <button className={dialogButton}>Yes</button>
                    <button className={dialogButton + ' p-[3px]'}>
                        <span className="flex h-full items-center justify-center rounded-[2px] border border-dotted border-[#222]">No</span>
                    </button>
                </div>
            </div>
        </div>
    );
}

const callout = 'absolute flex h-12 items-center justify-center border border-black bg-[#6d95c7] whitespace-nowrap';
const bubble = 'absolute flex h-9 w-9 items-center justify-center rounded-full border border-black bg-[#7aa0d0] text-white';

function Callouts() {
    return (
        <div className="font-['DejaVu_Sans',sans-serif] text-[21px] text-black">
            <div className="absolute top-[284px] left-[296px] h-[20px] w-[152px] border-2 border-dashed border-[#f00]" />
            <svg width="300" height="100" viewBox="0 0 300 100" className="pointer-events-none absolute top-[200px] left-[370px]">
                <path d="M296 6 22 90" stroke="#000" strokeWidth="1.500" />
                <path d="m10 94 10-10 4 11z" fill="#000" />
            </svg>
            <div className={callout + ' top-[159px] left-[235px] w-[863px]'}>
                If you delete the port in “Cargo”, it will also be deleted in “Port Rotation”.
            </div>
            <div className={bubble + ' top-[143px] left-[214px]'}>4</div>
            <div className="absolute top-[390px] left-[580px] h-[250px] w-[674px] border-2 border-dashed border-[#f00]" />
            <div className={callout + ' top-[627px] left-[683px] w-[687px] pr-2'}>
                A window will pop up to assure if you want to delete the port.
            </div>
            <div className={bubble + ' top-[612px] left-[663px]'}>5</div>
        </div>
    );
}

export default function App() {
    return (
        <div className="relative flex min-h-screen flex-col overflow-hidden bg-[#c4c5d0] pr-[5px] pb-[5px] pl-[7px] font-['DejaVu_Sans_Condensed','Noto_Sans',sans-serif] text-xs text-[#1c1c22]">
            <TitleBar />
            <nav className="flex h-6 items-center gap-[14px] bg-white pl-[6px] text-sm">
                <button><u>F</u>ile</button>
                <button><u>V</u>iew</button>
                <button><u>T</u>ools</button>
                <button><u>H</u>elp</button>
            </nav>
            <Toolbar />
            <Tabs />
            <main className="flex-1 border-r border-[#8f9096] bg-[#f1f1f2] px-[6px] pb-[13px]">
                <VesselParticular />
                <Cargo />
                <PortRotation />
                <Summary />
            </main>
            <StatusBar />
            <div className="absolute top-[152px] left-[132px] flex h-[26px] w-[192px] items-center gap-3 border border-[#8f8f8f] bg-[#fffdf2] pl-[2px] whitespace-nowrap">
                <BulbIcon />
                Input the
            </div>
            <QuestionDialog />
            <Callouts />
        </div>
    );
}
